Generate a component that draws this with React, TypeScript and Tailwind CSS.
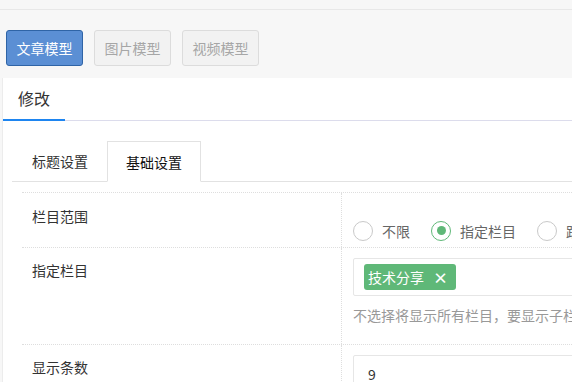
import { useState } from 'react';

const models = ['文章模型', '图片模型', '视频模型'];
const scopes = ['不限', '指定栏目', '跟随当前栏目'];

const Radio: React.FC<{ checked: boolean; label: string; onClick: () => void }> = ({ checked, label, onClick }) => (
  <button type="button" onClick={onClick} className="flex items-center gap-[9px] shrink-0 whitespace-nowrap">
    <span
      className={`w-[20px] h-[20px] rounded-full border-[1.5px] flex items-center justify-center bg-white ${
        checked ? 'border-[#5fb878]' : 'border-[#c9c9c9]'
      }`}
    >
      {checked && <span className="w-[9px] h-[9px] rounded-full bg-[#5fb878]" />}
    </span>
    <span className="text-[14px] leading-[20px] text-[#666]">{label}</span>
  </button>
);

export default function App() {
  const [model, setModel] = useState(0);
  const [scope, setScope] = useState(1);
  const [tags, setTags] = useState<string[]>(['技术分享']);

  return (
    <div
      className="w-[572px] h-[382px] overflow-hidden bg-[#f7f7f7]"
      style={{ fontFamily: '"Noto Sans CJK SC", "Liberation Sans", sans-serif' }}
    >
      {/* top strip */}
      <div className="h-[10px] border-b border-[#e8e8e8]" />

      {/* model switch */}
      <div className="flex gap-[11px] pl-[6px] pt-[20px] pb-[12px]">
        {models.map((m, i) => (
          <button
            key={m}
            type="button"
            onClick={() => setModel(i)}
            className={`w-[77px] h-[36px] rounded-[3px] border text-[14px] ${
              model === i
                ? 'bg-[#5b8fd4] border-[#2f64a6] text-white'
                : 'bg-[#f2f2f2] border-[#dcdcdc] text-[#a6a6a6]'
            }`}
          >
            {m}
          </button>
        ))}
      </div>

      {/* panel */}
      <div className="ml-[2px] border-l border-[#ececec] bg-white h-full">
        <div className="flex h-[43px] border-b border-[#dcdcec]">
          <div className="w-[62px] pl-[15px] pt-[9px] border-b-2 border-[#1e85f0] -mb-px text-[16px] leading-[22px] text-[#333]">
            修改
          </div>
        </div>

        <div className="pl-[9px] pt-[20px]">
          {/* inner tabs */}
          <div className="flex h-[41px] border-b border-[#e2e2e2]">
            <div className="pl-[20px] pr-[19px] pt-[10px] text-[14px] leading-[20px] text-[#333]">标题设置</div>
            <div className="px-[18px] pt-[10px] -mb-px bg-white border border-b-white border-[#e2e2e2] text-[14px] leading-[20px] text-[#111]">
              基础设置
            </div>
          </div>

          {/* form table */}
          <div className="ml-[10px] mt-[10px] border-t border-dotted border-[#dedede]">
            <div className="flex h-[55px] border-b border-dotted border-[#dedede]">
              <div className="w-[320px] shrink-0 pl-[10px] pt-[13px] border-r border-dotted border-[#dedede] text-[14px] leading-[20px] text-[#333]">
                栏目范围
              </div>
              <div className="flex gap-[21px] pl-[11px] pt-[21px]">
                {scopes.map((s, i) => (
                  <Radio key={s} label={s} checked={scope === i} onClick={() => setScope(i)} />
                ))}
              </div>
            </div>

            <div className="flex h-[97px] border-b border-dotted border-[#dedede]">
              <div className="w-[320px] shrink-0 pl-[10px] pt-[12px] border-r border-dotted border-[#dedede] text-[14px] leading-[20px] text-[#333]">
                指定栏目
              </div>
              <div className="pl-[11px] pt-[10px]">
                <div className="w-[300px] h-[38px] border border-[#e6e6e6] rounded-[2px] flex items-center pl-[10px] gap-[6px]">
                  {tags.map((t) => (
                    <span
                      key={t}
                      className="h-[26px] flex items-center pl-[4px] pr-[8px] gap-[9px] rounded-[3px] bg-[#5fb878] text-white text-[14px]"
                    >
                      {t}
                      <button
                        type="button"
                        onClick={() => setTags(tags.filter((x) => x !== t))}
                        className="text-[15px] font-bold leading-none"
                      >
                        ×
                      </button>
                    </span>
                  ))}
                </div>
                <div className="mt-[9px] text-[14px] leading-[20px] text-[#999] whitespace-nowrap">
                  不选择将显示所有栏目，要显示子栏目请同时选择
                </div>
              </div>
            </div>

            <div className="flex h-[60px]">
              <div className="w-[320px] shrink-0 pl-[10px] pt-[12px] border-r border-dotted border-[#dedede] text-[14px] leading-[20px] text-[#333]">
                显示条数
              </div>
              <div className="pl-[11px] pt-[10px]">
                <input
                  defaultValue="9"
                  className="w-[300px] h-[38px] border border-[#e6e6e6] rounded-[2px] pl-[14px] text-[14px] text-[#333] outline-none"
                />
              </div>
            </div>
          </div>
        </div>
      </div>
    </div>
  );
}
